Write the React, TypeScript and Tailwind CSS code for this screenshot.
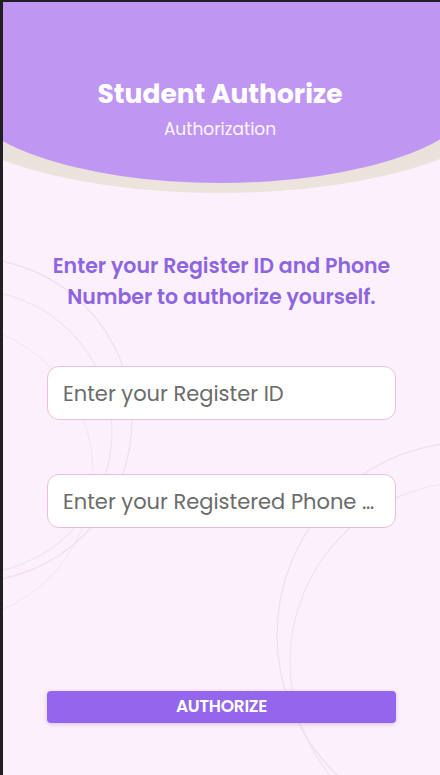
import React from 'react';

const font = { fontFamily: 'Poppins, Inter, "Noto Sans", sans-serif' };

function BackgroundRings() {
  return (
    <svg className="absolute inset-0 h-full w-full pointer-events-none" viewBox="0 0 437 773" fill="none">
      <circle cx="-33" cy="418" r="162" stroke="#F1DDEC" strokeWidth="1.2" />
      <circle cx="-33" cy="430" r="142" stroke="#F3E2EE" strokeWidth="1.2" />
      <circle cx="-60" cy="470" r="150" stroke="#F4E4F0" strokeWidth="1" />
      <circle cx="467" cy="633" r="193" stroke="#F1DDEC" strokeWidth="1.2" />
      <circle cx="467" cy="660" r="180" stroke="#F3E2EE" strokeWidth="1.2" />
    </svg>
  );
}

function Header() {
  return (
    <div className="relative h-[193px] overflow-hidden">
      <div className="absolute left-[-83px] top-[-20px] h-[211px] w-[600px] rounded-b-[300px_106px] bg-gradient-to-b from-[#E3D8CF] to-[#ECE4DD]" />
      <div className="absolute left-[-43px] top-[-20px] flex h-[201px] w-[520px] flex-col items-center rounded-b-[260px_93px] bg-[#BF97F2] pt-[95px]">
        <h1 className="text-[26.5px] font-bold leading-[34px] text-white">Student Authorize</h1>
        <p className="mt-[6px] text-[17px] leading-[24px] text-[#FBF5FF]">Authorization</p>
      </div>
    </div>
  );
}

export default function App() {
  return (
    <div className="h-[775px] w-[440px] bg-[#221F24] pl-[3px] pt-[2px]" style={font}>
      <div className="relative h-[773px] w-[437px] overflow-hidden bg-[#FCF0FC]">
        <BackgroundRings />
        <div className="relative flex h-full flex-col">
          <Header />
          <p className="mt-[55px] px-[36px] text-center text-[20.5px] font-semibold leading-[31px] text-[#8E65E0]">
            Enter your Register ID and Phone Number to authorize yourself.
          </p>
          <div className="mt-[54px] flex flex-col gap-[54px] px-[44px]">
            <input
              className="h-[54px] w-full truncate rounded-[12px] border border-[#EBBFDC] bg-white pl-[15px] pr-[16px] text-[21px] text-[#555] placeholder:text-[#6b6b6b] outline-none"
              placeholder="Enter your Register ID"
              style={font}
            />
            <input
              className="h-[54px] w-full truncate rounded-[12px] border border-[#EBBFDC] bg-white pl-[15px] pr-[16px] text-[21px] text-[#555] placeholder:text-[#6b6b6b] outline-none"
              placeholder="Enter your Registered Phone Number"
              style={font}
            />
          </div>
          <div className="mt-auto px-[44px] pb-[52px]">
            <button className="h-[32px] w-full rounded-[4px] bg-[#9466EE] text-[17px] font-semibold tracking-[-0.3px] text-white shadow-[0_1px_4px_rgba(150,100,230,0.35)]">
              AUTHORIZE
            </button>
          </div>
        </div>
      </div>
    </div>
  );
}
